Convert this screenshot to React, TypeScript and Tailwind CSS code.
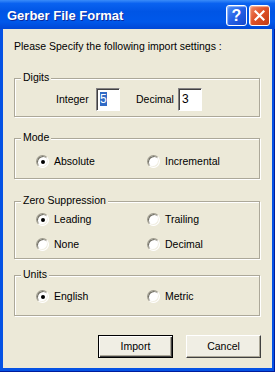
import React from "react";

const Radio = ({ label, checked }: { label: string; checked?: boolean }) => (
  <div className="flex items-center h-[13px]">
    <span className="flex items-center justify-center w-[13px] h-[13px] rounded-full bg-white border border-t-[#9d9a8c] border-l-[#9d9a8c] border-b-white border-r-white shadow-[inset_1px_1px_0_#716f64,inset_-1px_-1px_0_#f1efe2]">
      {checked && <span className="w-[4px] h-[4px] rounded-full bg-black" />}
    </span>
    <span className="ml-[5px] leading-[13px]">{label}</span>
  </div>
);

const Group = ({
  title,
  className,
  children,
}: {
  title: string;
  className: string;
  children: React.ReactNode;
}) => (
  <div
    className={`relative ml-[11px] mr-[12px] border border-[#aca899] shadow-[inset_1px_1px_0_#fff,1px_1px_0_#fff] ${className}`}
  >
    <span className="absolute left-[6px] top-[-8px] px-[2px] bg-[#ece9d8] leading-[13px]">
      {title}
    </span>
    {children}
  </div>
);

const App: React.FC = () => {
  return (
    <div className="w-[275px] h-[372px] flex flex-col bg-[#0552e4] shadow-[inset_-1px_-1px_0_#001c9c] font-[Liberation_Sans,Arial,sans-serif] text-[10.5px] text-black select-none">
      {/* Title bar */}
      <div className="h-[29px] flex items-start shrink-0 bg-[linear-gradient(to_bottom,#3a8cf9_0%,#0a62f0_12%,#0055e5_40%,#0058ea_75%,#0047d6_100%)]">
        <span className="mt-[8px] ml-[7px] text-[13px] leading-[16px] font-bold text-white [text-shadow:1px_1px_0_#0c2a9c]">
          Gerber File Format
        </span>
        <div className="ml-auto mt-[5px] mr-[5px] flex gap-[2px]">
          <div className="w-[21px] h-[21px] rounded-[3px] border border-white flex items-center justify-center bg-[linear-gradient(135deg,#4f8ff7_0%,#2460e6_50%,#1447cc_100%)] shadow-[inset_1px_1px_1px_#8fb6fb]">
            <span className="text-white font-bold text-[16px] leading-[16px]">?</span>
          </div>
          <div className="w-[21px] h-[21px] rounded-[3px] border border-white flex items-center justify-center bg-[linear-gradient(135deg,#ef8a68_0%,#e0522a_45%,#c23c14_100%)] shadow-[inset_1px_1px_1px_#f5b29a]">
            <svg width="11" height="11" viewBox="0 0 11 11">
              <path d="M1.5 1.5 L9.5 9.5 M9.5 1.5 L1.5 9.5" stroke="#fff" strokeWidth="2.2" strokeLinecap="square" />
            </svg>
          </div>
        </div>
      </div>

      {/* Client area */}
      <div className="flex-1 mx-[3px] mb-[4px] bg-[#ece9d8] flex flex-col">
        <p className="mt-[11px] ml-[11px] leading-[13px]">
          Please Specify the following import settings :
        </p>

        <Group title="Digits" className="mt-[25px] h-[39px]">
          <div className="flex items-center pt-[9px] pl-[41px]">
            <span className="w-[40px] leading-[13px]">Integer</span>
            <div className="w-[24px] h-[23px] bg-white border border-t-[#848284] border-l-[#848284] border-b-white border-r-white shadow-[inset_1px_1px_0_#424142] pl-[3px] pt-[3px]">
              <span className="bg-[#316ac5] text-white leading-[14px] text-[12px]">5</span>
            </div>
            <span className="ml-[16px] w-[42px] leading-[13px]">Decimal</span>
            <div className="w-[24px] h-[23px] bg-white border border-t-[#848284] border-l-[#848284] border-b-white border-r-white shadow-[inset_1px_1px_0_#424142] pl-[3px] pt-[3px]">
              <span className="leading-[14px] text-[12px]">3</span>
            </div>
          </div>
        </Group>

        <Group title="Mode" className="mt-[21px] h-[41px]">
          <div className="grid grid-cols-[111px_1fr] pl-[21px] pt-[16px]">
            <Radio label="Absolute" checked />
            <Radio label="Incremental" />
          </div>
        </Group>

        <Group title="Zero Suppression" className="mt-[22px] h-[58px]">
          <div className="grid grid-cols-[111px_1fr] gap-y-[12px] pl-[21px] pt-[11px]">
            <Radio label="Leading" checked />
            <Radio label="Trailing" />
            <Radio label="None" />
            <Radio label="Decimal" />
          </div>
        </Group>

        <Group title="Units" className="mt-[16px] h-[41px]">
          <div className="grid grid-cols-[111px_1fr] pl-[21px] pt-[14px]">
            <Radio label="English" checked />
            <Radio label="Metric" />
          </div>
        </Group>

        <div className="mt-[19px] flex justify-end gap-[13px] pr-[11px]">
          <button className="w-[75px] h-[23px] bg-[#f0eee4] border border-black shadow-[inset_1px_1px_0_#fff,inset_-1px_-1px_0_#404040,inset_-2px_-2px_0_#aca899] leading-[13px]">
            Import
          </button>
          <button className="w-[75px] h-[23px] bg-[#f0eee4] border border-t-white border-l-white border-b-[#404040] border-r-[#404040] shadow-[inset_-1px_-1px_0_#aca899] leading-[13px]">
            Cancel
          </button>
        </div>
      </div>
    </div>
  );
};

export default App;
